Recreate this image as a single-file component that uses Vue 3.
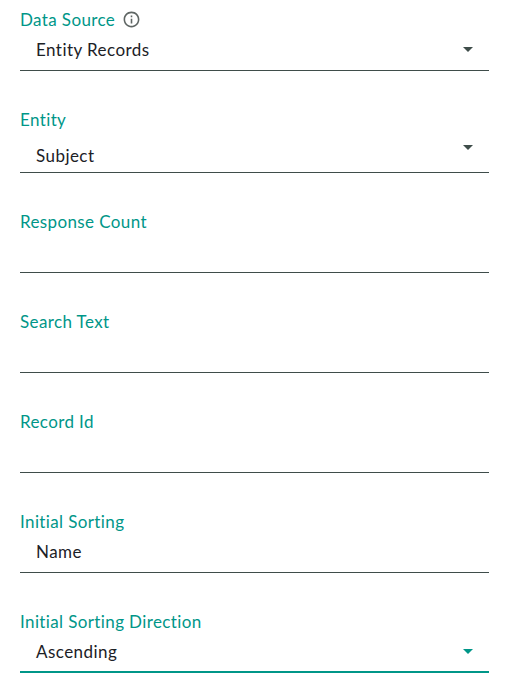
<template>
  <main class="form">
    <div v-for="f in fields" :key="f.label" class="field" :class="f.cls">
      <div class="label">
        <span>{{ f.label }}</span>
        <svg v-if="f.info" class="info" viewBox="0 0 24 24" width="19" height="19">
          <path d="M11 7h2v2h-2zm0 4h2v6h-2zm1-9C6.48 2 2 6.48 2 12s4.48 10 10 10 10-4.48 10-10S17.52 2 12 2zm0 18c-4.41 0-8-3.59-8-8s3.59-8 8-8 8 3.59 8 8-3.59 8-8 8z" />
        </svg>
      </div>
      <div class="control">
        <span class="value">{{ f.value }}</span>
        <svg v-if="f.select" class="caret" viewBox="0 0 10 5" width="10" height="5">
          <path d="M0 0l5 5 5-5z" />
        </svg>
      </div>
    </div>
  </main>
</template>

<script setup>
const fields = [
  { label: "Data Source", value: "Entity Records", select: true, info: true, cls: "first" },
  { label: "Entity", value: "Subject", select: true, cls: "entity" },
  { label: "Response Count", value: "" },
  { label: "Search Text", value: "" },
  { label: "Record Id", value: "" },
  { label: "Initial Sorting", value: "Name" },
  { label: "Initial Sorting Direction", value: "Ascending", select: true, cls: "focused" },
];
</script>

<style>
body {
  background: #fff;
}
</style>

<style scoped>
.form {
  width: 469px;
  margin-left: 20px;
  font-family: Lato, "Noto Sans", sans-serif;
}

.field {
  height: 100px;
  padding-top: 37px;
  box-sizing: border-box;
}

.first {
  height: 71px;
  padding-top: 8px;
}

.entity {
  height: 102px;
}

.label {
  display: flex;
  align-items: center;
  gap: 7px;
  box-sizing: border-box;
  height: 20px;
  padding-top: 2px;
  font-size: 17px;
  letter-spacing: 0.38px;
  color: #009688;
}

.info {
  fill: #5f6664;
}

.control {
  display: flex;
  align-items: center;
  justify-content: space-between;
  box-sizing: border-box;
  height: 43px;
  padding: 2px 16px 2px 16px;
  border-bottom: 1px solid #3f4d4a;
  font-size: 17px;
  letter-spacing: 0.45px;
  color: #1c2126;
}

.entity .control {
  height: 45px;
  padding-top: 10px;
  padding-bottom: 0;
}

.caret {
  fill: #3f4d4a;
  margin-top: 1px;
}

.entity .caret {
  margin-top: 0;
  margin-bottom: 15px;
}

.focused .control {
  padding-bottom: 0;
  border-bottom: 2px solid #009688;
}

.focused .caret {
  fill: #009688;
  margin-top: 0;
}
</style>
